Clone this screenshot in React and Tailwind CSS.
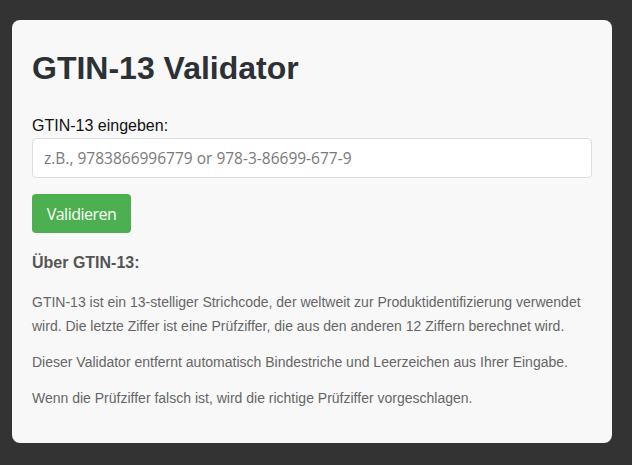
export default function App() {
  return (
    <div className="min-h-[465px] bg-[#333333] pt-[20px] pl-[12px]" style={{ fontFamily: '"Liberation Sans", Arial, sans-serif' }}>
      <div className="w-[600px] rounded-[8px] bg-[#f8f8f8] px-[20px] pt-[20px] pb-[20px]">
        <h1 className="mt-[10px] text-[32px] leading-[37px] font-bold text-[#2c3136]">GTIN-13 Validator</h1>
        <div className="mt-[30px] text-[16px] leading-[18px] text-[#111]">GTIN-13 eingeben:</div>
        <input
          className="mt-[3px] block h-[40px] w-[560px] rounded-[4px] border border-[#dddddd] bg-white px-[11px] text-[15.5px] placeholder:text-[#7a7a7a] outline-none"
          style={{ fontFamily: '"Open Sans", sans-serif' }}
          placeholder="z.B., 9783866996779 or 978-3-86699-677-9"
        />
        <button
          className="mt-[16px] block h-[39px] w-[99px] rounded-[4px] bg-[#4caf50] text-[16px] tracking-[-0.5px] text-white"
          style={{ fontFamily: '"Open Sans", sans-serif' }}
        >
          Validieren
        </button>
        <h3 className="mt-[20px] text-[16px] leading-[20px] font-bold text-[#555]">Über GTIN-13:</h3>
        <p className="mt-[17px] text-[14px] leading-[24px] text-[#666]">
          GTIN-13 ist ein 13-stelliger Strichcode, der weltweit zur Produktidentifizierung verwendet wird. Die letzte Ziffer ist eine Prüfziffer, die aus den anderen 12 Ziffern berechnet wird.
        </p>
        <p className="mt-[12px] text-[14px] leading-[24px] text-[#666]">
          Dieser Validator entfernt automatisch Bindestriche und Leerzeichen aus Ihrer Eingabe.
        </p>
        <p className="mt-[12px] text-[14px] leading-[24px] text-[#666]">
          Wenn die Prüfziffer falsch ist, wird die richtige Prüfziffer vorgeschlagen.
        </p>
        <div className="h-[13px]" />
      </div>
    </div>
  );
}
